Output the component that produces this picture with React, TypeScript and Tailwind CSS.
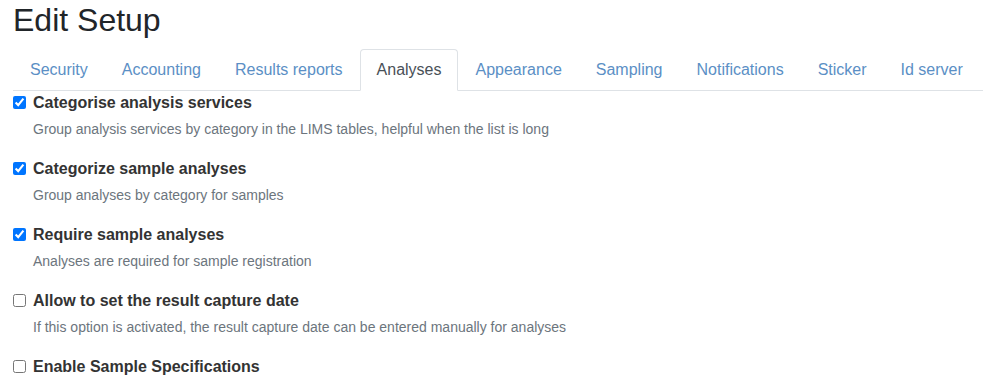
import React from "react";

const tabs = [
  "Security",
  "Accounting",
  "Results reports",
  "Analyses",
  "Appearance",
  "Sampling",
  "Notifications",
  "Sticker",
  "Id server",
];

const options = [
  {
    label: "Categorise analysis services",
    desc: "Group analysis services by category in the LIMS tables, helpful when the list is long",
    checked: true,
  },
  {
    label: "Categorize sample analyses",
    desc: "Group analyses by category for samples",
    checked: true,
  },
  {
    label: "Require sample analyses",
    desc: "Analyses are required for sample registration",
    checked: true,
  },
  {
    label: "Allow to set the result capture date",
    desc: "If this option is activated, the result capture date can be entered manually for analyses",
    checked: false,
  },
  {
    label: "Enable Sample Specifications",
    desc: "",
    checked: false,
  },
];

export default function App() {
  return (
    <div
      className="bg-white w-[983px] h-[383px] overflow-hidden pl-[13px] text-[#212529]"
      style={{ fontFamily: '"Liberation Sans", Arial, sans-serif' }}
    >
      <h1 className="text-[32px] leading-[1.2] font-normal text-[#212529] pt-[1px]">Edit Setup</h1>
      <ul className="flex border-b border-[#dee2e6] mt-[10px]">
        {tabs.map((t) => {
          const active = t === "Analyses";
          return (
            <li key={t} className="-mb-px">
              <span
                className={
                  "block px-4 py-2 text-[16px] leading-6 border rounded-t-[4px] " +
                  (active
                    ? "border-[#dee2e6] border-b-white bg-white text-[#495057]"
                    : "border-transparent text-[#5b8fc5]")
                }
              >
                {t}
              </span>
            </li>
          );
        })}
      </ul>
      <div className="flex flex-col">
        {options.map((o) => (
          <div key={o.label} className="mb-[17px]">
            <label className="flex items-center leading-6 text-[16px] font-bold text-[#333]">
              <input
                type="checkbox"
                defaultChecked={o.checked}
                className="w-[13px] h-[13px] m-0 mr-[7px] -mt-[1px] accent-[#0075ff]"
              />
              {o.label}
            </label>
            {o.desc && (
              <div className="mt-[3px] pl-[20px] text-[14px] leading-[22px] text-[#6c757d]">{o.desc}</div>
            )}
          </div>
        ))}
      </div>
    </div>
  );
}
